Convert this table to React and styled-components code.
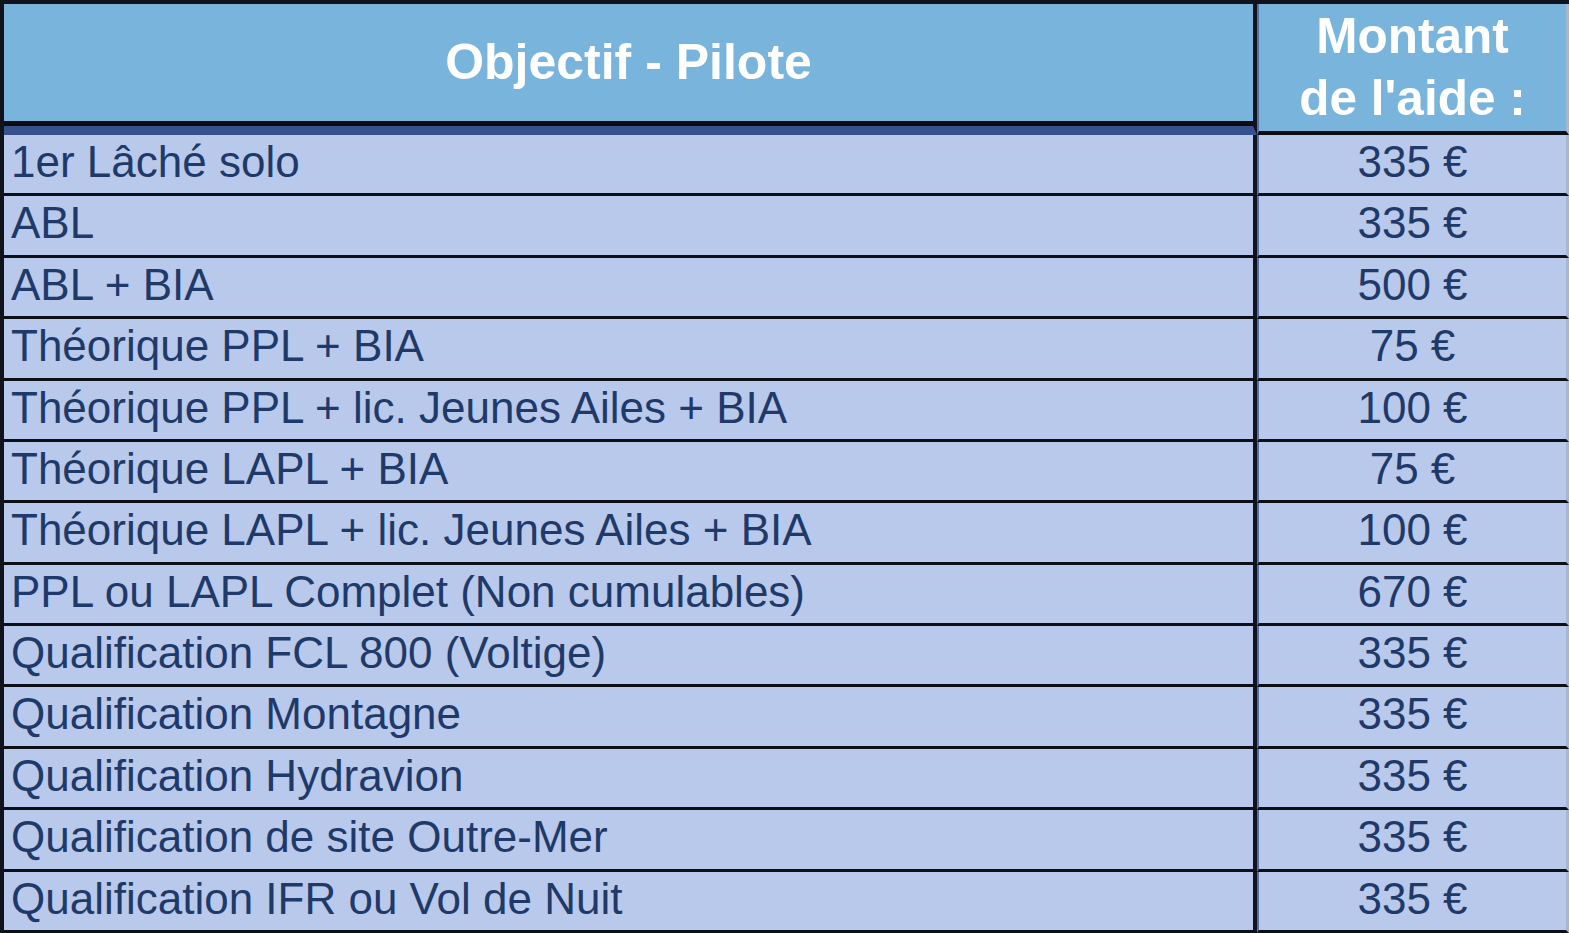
import React from "react";
import styled, { createGlobalStyle } from "styled-components";

const GlobalStyle = createGlobalStyle`
  html, body {
    margin: 0;
    padding: 0;
    background: #c9d2e4;
  }
  body {
    font-family: "Liberation Sans", Arial, sans-serif;
  }
`;

const Table = styled.div`
  width: 1569px;
  height: 933px;
  box-sizing: border-box;
  border-top: 4px solid #10131d;
  border-left: 4px solid #10131d;
  display: grid;
  grid-template-columns: 1253px 1fr;
  grid-template-rows: 131px repeat(13, 1fr);
  overflow: hidden;
`;

const HeadLeft = styled.div`
  border-right: 4px solid #10131d;
  border-bottom: 9px solid #35528e;
  display: flex;
`;

const HeadInner = styled.div`
  flex: 1;
  background: #79b4dd;
  border-bottom: 5px solid #0b0c12;
  display: flex;
  align-items: center;
  justify-content: center;
  color: #fff;
  font-weight: bold;
  font-size: 50px;
  padding-bottom: 2px;
`;

const HeadRight = styled.div`
  background: #79b4dd;
  border-left: 2px solid #56709f;
  border-right: 3px solid #a9b6d2;
  border-bottom: 4px solid #0b0c12;
  display: flex;
  align-items: center;
  justify-content: center;
  text-align: center;
  color: #fff;
  font-weight: bold;
  font-size: 49.5px;
  line-height: 62px;
  padding-bottom: 2px;
`;

const Cell = styled.div`
  background: #b9c9eb;
  color: #1f3a68;
  font-size: 44px;
  line-height: 54px;
  white-space: nowrap;
  border-bottom: 3px solid #0d0f17;
  box-sizing: border-box;
  ${(p) =>
    p.$amount
      ? `
    text-align: center;
    border-left: 2px solid #56709f;
    border-right: 3px solid #a9b6d2;
  `
      : `
    border-right: 4px solid #10131d;
    padding-left: 7px;
  `}
`;

const rows = [
  ["1er Lâché solo", "335 €"],
  ["ABL", "335 €"],
  ["ABL + BIA", "500 €"],
  ["Théorique PPL + BIA", "75 €"],
  ["Théorique PPL + lic. Jeunes Ailes + BIA", "100 €"],
  ["Théorique LAPL + BIA", "75 €"],
  ["Théorique LAPL + lic. Jeunes Ailes + BIA", "100 €"],
  ["PPL ou LAPL Complet (Non cumulables)", "670 €"],
  ["Qualification FCL 800 (Voltige)", "335 €"],
  ["Qualification Montagne", "335 €"],
  ["Qualification Hydravion", "335 €"],
  ["Qualification de site Outre-Mer", "335 €"],
  ["Qualification IFR ou Vol de Nuit", "335 €"],
];

const App = () => {
  return (
    <>
      <GlobalStyle />
      <Table>
        <HeadLeft>
          <HeadInner>Objectif - Pilote</HeadInner>
        </HeadLeft>
        <HeadRight>
          Montant
          <br />
          de l'aide :
        </HeadRight>
        {rows.map(([label, amount]) => (
          <React.Fragment key={label}>
            <Cell>{label}</Cell>
            <Cell $amount>{amount}</Cell>
          </React.Fragment>
        ))}
      </Table>
    </>
  );
};

export default App;
